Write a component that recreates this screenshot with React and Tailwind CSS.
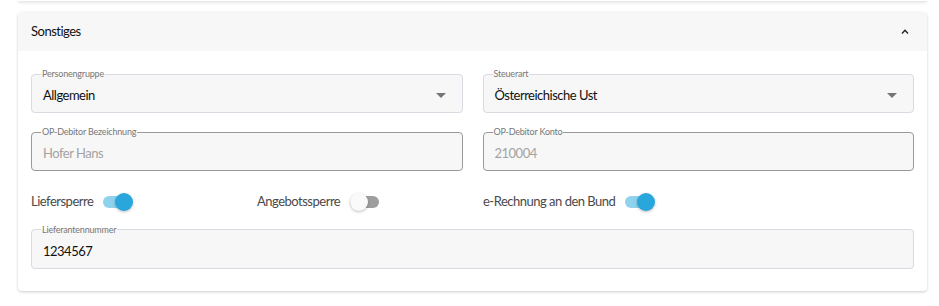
import React, { useState } from 'react';

const Field = ({ label, value, disabled, select, className = '' }) => {
  return (
    <fieldset
      className={
        'rounded-[4px] border bg-[#f7f7f7] px-[11px] pb-[8px] ' +
        (disabled ? 'border-[#9a9a9a] ' : 'border-[#dadae2] ') +
        className
      }
    >
      <legend className="ml-[-2px] px-[1px] text-[9px] leading-[10px] tracking-[-0.2px] text-[#777]">{label}</legend>
      <div className="mt-[7px] flex items-center justify-between">
        <span
          className={
            'text-[13px] leading-[18px] tracking-[-0.5px] ' + (disabled ? 'text-[#a3a3a3]' : 'text-[#111]')
          }
        >
          {value}
        </span>
        {select && (
          <svg width="10" height="5" viewBox="0 0 10 5" className="mr-[5px]">
            <path d="M0 0 L10 0 L5 5 Z" fill="#757575" />
          </svg>
        )}
      </div>
    </fieldset>
  );
};

const Toggle = ({ checked, onChange }) => (
  <button
    type="button"
    onClick={() => onChange(!checked)}
    className="relative flex h-[18px] w-[30px] items-center"
  >
    <span
      className={
        'h-[12px] w-[29px] rounded-full ' + (checked ? 'bg-[#8fd2ee]' : 'bg-[#9e9e9e]')
      }
    />
    <span
      className={
        'absolute top-0 h-[18px] w-[18px] rounded-full shadow-[0_1px_3px_rgba(0,0,0,0.25)] ' +
        (checked ? 'left-[12px] bg-[#29a6dc]' : 'left-0 bg-[#fafafa]')
      }
    />
  </button>
);

const SwitchItem = ({ label, checked, onChange, className = '' }) => (
  <div className={'flex items-center gap-[10px] ' + className}>
    <span className="text-[13px] tracking-[-0.5px] text-[#4a4a4a]">{label}</span>
    <Toggle checked={checked} onChange={onChange} />
  </div>
);

export default function App() {
  const [liefer, setLiefer] = useState(true);
  const [angebot, setAngebot] = useState(false);
  const [eRechnung, setERechnung] = useState(true);

  return (
    <div className="h-[306px] w-[939px] overflow-hidden bg-white font-['Lato',sans-serif]">
      <div className="mx-[12px] ml-[18px] h-[1px] bg-white shadow-[0_1px_3px_rgba(0,0,0,0.3)]" />

      <div className="ml-[18px] mr-[12px] mt-[11px] overflow-hidden rounded-[4px] bg-white shadow-[0_1px_3px_rgba(0,0,0,0.2)]">
        <div className="flex h-[39px] items-center justify-between bg-[#f7f7f7] px-[13px]">
          <span className="text-[13px] tracking-[-0.5px] text-[#111]">Sonstiges</span>
          <svg width="8" height="5" viewBox="0 0 8 5" className="mr-[5px]">
            <path d="M1 4.5 L4 1.3 L7 4.5" fill="none" stroke="#222" strokeWidth="1.4" />
          </svg>
        </div>

        <div className="flex flex-col px-[13px] pb-[22px] pt-[18px]">
          <div className="grid grid-cols-2 gap-x-[20px]">
            <Field label="Personengruppe" value="Allgemein" select />
            <Field label="Steuerart" value="Österreichische Ust" select />
          </div>

          <div className="mt-[14px] grid grid-cols-2 gap-x-[20px]">
            <Field label="OP-Debitor Bezeichnung" value="Hofer Hans" disabled />
            <Field label="OP-Debitor Konto" value="210004" disabled />
          </div>

          <div className="mt-[21px] flex items-center">
            <SwitchItem className="w-[226px]" label="Liefersperre" checked={liefer} onChange={setLiefer} />
            <SwitchItem className="w-[226px]" label="Angebotssperre" checked={angebot} onChange={setAngebot} />
            <SwitchItem label="e-Rechnung an den Bund" checked={eRechnung} onChange={setERechnung} />
          </div>

          <Field className="mt-[13px]" label="Lieferantennummer" value="1234567" />
        </div>
      </div>
    </div>
  );
}
